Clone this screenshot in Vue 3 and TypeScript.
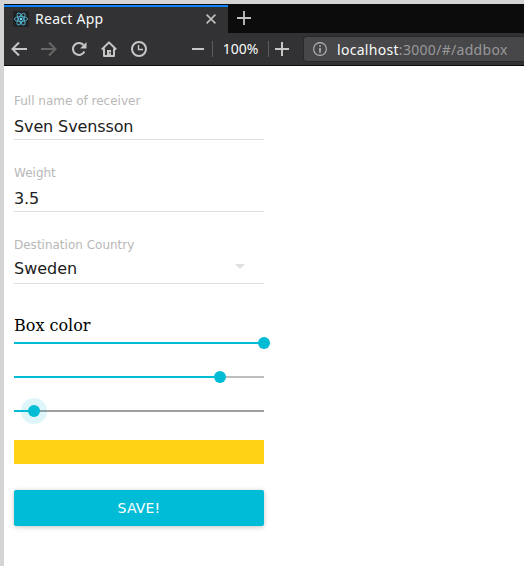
<script setup lang="ts">
interface Field {
  label: string
  value: string
  select?: boolean
}
interface Slider {
  name: string
  value: number
  focused?: boolean
}

const fields: Field[] = [
  { label: 'Full name of receiver', value: 'Sven Svensson' },
  { label: 'Weight', value: '3.5' },
  { label: 'Destination Country', value: 'Sweden', select: true },
]
const sliders: Slider[] = [
  { name: 'red', value: 250 },
  { name: 'green', value: 206 },
  { name: 'blue', value: 20, focused: true },
]
</script>

<template>
  <div class="window">
    <header class="chrome">
      <div class="tabs">
        <div class="tab">
          <svg class="favicon" width="16" height="16" viewBox="0 0 16 16">
            <rect width="16" height="16" rx="1" fill="#202224" />
            <g fill="none" stroke="#53b6cf" stroke-width="0.9">
              <ellipse cx="8" cy="8" rx="6.6" ry="2.5" />
              <ellipse cx="8" cy="8" rx="6.6" ry="2.5" transform="rotate(60 8 8)" />
              <ellipse cx="8" cy="8" rx="6.6" ry="2.5" transform="rotate(120 8 8)" />
            </g>
            <circle cx="8" cy="8" r="1.3" fill="#61dafb" />
          </svg>
          <span class="tab-title">React App</span>
          <svg class="close" width="10" height="10" viewBox="0 0 10 10">
            <path d="M.6.6l8.800 8.800M9.400.6L.6 9.400" fill="none" stroke="#bdbdbe" stroke-width="1.7" />
          </svg>
        </div>
        <svg class="new-tab" width="14" height="14" viewBox="0 0 14 14">
          <path d="M7 0v14M0 7h14" stroke="#c2c2c2" stroke-width="1.8" />
        </svg>
      </div>
      <div class="toolbar">
        <div class="nav">
          <svg width="16" height="16" viewBox="0 0 16 16">
            <path d="M16 8H1.500M8 1.500L1.500 8 8 14.500" class="line" />
          </svg>
          <svg class="disabled" width="16" height="16" viewBox="0 0 16 16">
            <path d="M0 8h14.500M8 1.500L14.500 8 8 14.500" class="line" />
          </svg>
          <svg width="16" height="16" viewBox="0 0 16 16">
            <path d="M13.400 10.500A6 6 0 1 1 12.500 4" class="line" />
            <path d="M15.500 1v6.500H9z" fill="#c6c6c7" />
          </svg>
          <svg width="16" height="16" viewBox="0 0 16 16">
            <path d="M.8 8.500L8 1.400l7.200 7.100M3 7.500V15h10V7.500" class="line" stroke-linejoin="round" />
            <path d="M6 9h4v6H6z" fill="#c6c6c7" />
            <path d="M8.300 11h1v1.400h-1z" fill="#323234" />
          </svg>
          <svg width="16" height="16" viewBox="0 0 16 16">
            <circle cx="8" cy="8" r="7" class="line" />
            <path d="M7.500 4v4.500H12" class="line thin" />
          </svg>
        </div>
        <svg class="minus" width="12" height="14" viewBox="0 0 12 14">
          <path d="M0 7h12" class="line" />
        </svg>
        <i class="divider" />
        <span class="zoom">100%</span>
        <i class="divider" />
        <svg class="plus" width="14" height="14" viewBox="0 0 14 14">
          <path d="M7 0v14M0 7h14" class="line" />
        </svg>
        <div class="address">
          <svg width="14" height="14" viewBox="0 0 14 14">
            <circle cx="7" cy="7" r="6.400" fill="none" stroke="#b4b4b5" stroke-width="1.1" />
            <path d="M6.200 6h1.600v4.800H6.200zM6.200 3.300h1.600v1.500H6.200z" fill="#b4b4b5" />
          </svg>
          <span class="url"><b>localhost</b>:3000/#/addbox</span>
        </div>
      </div>
    </header>
    <main class="page">
      <div v-for="f in fields" :key="f.label" class="field" :class="{ select: f.select }">
        <label>{{ f.label }}</label>
        <div class="value">
          <span>{{ f.value }}</span>
          <svg v-if="f.select" width="10" height="5" viewBox="0 0 10 5">
            <path d="M0 0h10L5 5z" fill="#e0e0e0" />
          </svg>
        </div>
      </div>
      <div class="heading">Box color</div>
      <div v-for="s in sliders" :key="s.name" class="slider" :class="{ focused: s.focused }">
        <div class="track">
          <div class="filled" :style="{ width: (s.value / 250) * 100 + '%' }"><span class="thumb" /></div>
        </div>
      </div>
      <div class="swatch" />
      <button class="save">SAVE!</button>
    </main>
  </div>
</template>

<style>
body {
  margin: 0;
  background: #fff;
}
</style>

<style scoped>
.window {
  box-sizing: border-box;
  width: 524px;
  height: 566px;
  overflow: hidden;
  border-top: 4px solid #d4d4d4;
  border-left: 4px solid #d4d4d4;
  background: #fff;
}
svg {
  display: block;
  flex: none;
}
.chrome {
  height: 62px;
  box-sizing: border-box;
  background: #0c0c0d;
  border-bottom: 1px solid #0c0c0d;
  font-family: "Noto Sans", sans-serif;
}
.tabs {
  height: 29px;
  display: flex;
}
.tab {
  box-sizing: border-box;
  width: 224px;
  margin-top: 1px;
  height: 28px;
  border-top: 2px solid #0a84ff;
  background: #323234;
  display: flex;
  align-items: center;
  padding: 0 12px 0 9px;
}
.favicon {
  margin-bottom: 2px;
}
.tab-title {
  flex: 1;
  margin: -2px 0 0 6px;
  font-size: 14px;
  line-height: 20px;
  letter-spacing: 0.27px;
  color: #f9f9fa;
}
.close {
  margin-bottom: 2px;
}
.new-tab {
  margin: 7px 0 0 9px;
}
.toolbar {
  height: 32px;
  background: #323234;
  display: flex;
  align-items: center;
}
.nav {
  display: flex;
  gap: 14px;
  margin-left: 7px;
}
.line {
  fill: none;
  stroke: #c6c6c7;
  stroke-width: 2;
}
.thin {
  stroke-width: 1.4;
}
.disabled {
  opacity: 0.35;
}
.minus {
  margin: 0 8px 0 45px;
}
.divider {
  width: 1px;
  height: 16px;
  background: #5c5c5e;
}
.zoom {
  width: 55px;
  text-align: center;
  font-size: 14px;
  line-height: 20px;
  color: #f9f9fa;
}
.plus {
  margin-left: 6px;
}
.address {
  flex: 1;
  box-sizing: border-box;
  height: 26px;
  margin-left: 14px;
  padding-left: 9px;
  display: flex;
  align-items: center;
  border: 1px solid #29292b;
  border-right: 0;
  border-radius: 3px 0 0 3px;
  background: #474749;
}
.url {
  margin: 1px 0 0 10px;
  font-size: 14px;
  line-height: 20px;
  letter-spacing: 0.3px;
  color: #98989a;
  white-space: nowrap;
}
.url b {
  font-weight: 400;
  color: #f9f9fa;
}
.page {
  width: 250px;
  padding: 26px 0 0 10px;
  font-family: "DejaVu Sans", sans-serif;
}
.field {
  box-sizing: border-box;
  height: 48px;
  margin-bottom: 24px;
  border-bottom: 1px solid #e0e0e0;
}
.field label {
  display: block;
  font-size: 12px;
  line-height: 18px;
  color: #b8b8b8;
}
.value {
  display: flex;
  justify-content: space-between;
  align-items: center;
  padding: 7px 19px 0 0;
  font-size: 16px;
  line-height: 20px;
  letter-spacing: -0.12px;
  color: #212121;
}
.select .value {
  padding-top: 5px;
}
.select .value span {
  letter-spacing: 0;
}
.value svg {
  margin-bottom: 5px;
}
.heading {
  margin-top: 32px;
  height: 19px;
  font-family: "DejaVu Serif", serif;
  font-size: 16px;
  line-height: 20px;
  color: #000;
}
.slider {
  height: 18px;
  margin-bottom: 16px;
  display: flex;
  align-items: center;
}
.heading + .slider {
  margin-top: -1px;
}
.track {
  width: 100%;
  height: 2px;
  background: #bdbdbd;
}
.focused .track {
  background: #9e9e9e;
}
.filled {
  position: relative;
  height: 2px;
  background: #00bcd4;
}
.thumb {
  position: absolute;
  top: -5px;
  right: -6px;
  width: 12px;
  height: 12px;
  border-radius: 50%;
  background: #00bcd4;
}
.focused .thumb {
  box-shadow: 0 0 0 7px rgba(0, 188, 212, 0.13);
}
.swatch {
  height: 24px;
  margin-top: 20px;
  background: #ffd214;
}
.save {
  display: block;
  width: 100%;
  height: 36px;
  margin-top: 26px;
  padding: 0;
  border: 0;
  border-radius: 2px;
  background: #00bcd7;
  box-shadow: 0 1px 6px rgba(0, 0, 0, 0.12), 0 1px 4px rgba(0, 0, 0, 0.12);
  color: #fff;
  font: 14px/36px "DejaVu Sans", sans-serif;
  letter-spacing: 0.2px;
}
</style>
